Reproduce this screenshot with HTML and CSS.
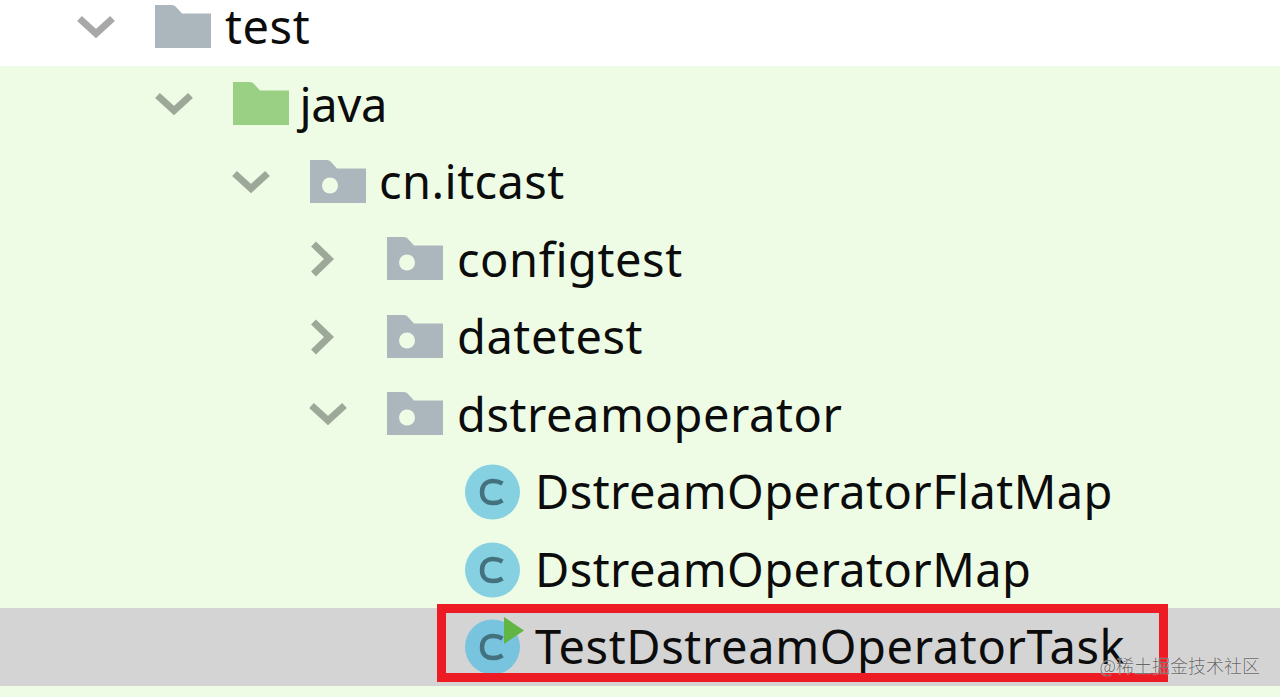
FILE: index.html
```
<!DOCTYPE html>
<html lang="en">
<head>
    <meta charset="UTF-8">
    <meta name="viewport" content="width=device-width, initial-scale=1.0">
    <title>Project tree</title>
    <link rel="stylesheet" href="styles.css">
</head>
<body>
    <svg width="0" height="0" class="defs">
        <symbol id="down" viewBox="0 0 38 38"><path d="M2.500 10.500L19 25.500L35.500 10.500"/></symbol>
        <symbol id="right" viewBox="0 0 38 38"><path d="M4.500 4L20 19L4.500 34"/></symbol>
        <symbol id="folder" viewBox="0 0 56 44"><path d="M0 0H17Q20 0 22 3L27 8.500H56V43H0Z"/></symbol>
        <symbol id="class" viewBox="0 0 56 56">
            <circle cx="27.500" cy="28" r="27.500"/>
            <path class="letter" d="M37.500 19.500C34 17.500 31 17 28 17C21 17 17 21.500 17 28.200C17 35 21 39 28 39C31.500 39 34.500 38.300 37.500 36.500"/>
        </symbol>
    </svg>

    <div class="tree">
        <div class="row root">
            <svg class="arrow"><use href="#down"/></svg>
            <svg class="folder"><use href="#folder"/></svg>
            <span class="label">test</span>
        </div>
        <div class="row level1">
            <svg class="arrow"><use href="#down"/></svg>
            <svg class="folder green"><use href="#folder"/></svg>
            <span class="label">java</span>
        </div>
        <div class="row level2">
            <svg class="arrow"><use href="#down"/></svg>
            <svg class="folder"><use href="#folder"/><circle class="dot" cx="20" cy="25.500" r="8"/></svg>
            <span class="label">cn.itcast</span>
        </div>
        <div class="row level3">
            <svg class="arrow"><use href="#right"/></svg>
            <svg class="folder"><use href="#folder"/><circle class="dot" cx="20" cy="25.500" r="8"/></svg>
            <span class="label">configtest</span>
        </div>
        <div class="row level3">
            <svg class="arrow"><use href="#right"/></svg>
            <svg class="folder"><use href="#folder"/><circle class="dot" cx="20" cy="25.500" r="8"/></svg>
            <span class="label">datetest</span>
        </div>
        <div class="row level3">
            <svg class="arrow"><use href="#down"/></svg>
            <svg class="folder"><use href="#folder"/><circle class="dot" cx="20" cy="25.500" r="8"/></svg>
            <span class="label">dstreamoperator</span>
        </div>
        <div class="row level4">
            <svg class="class"><use href="#class"/></svg>
            <span class="label">DstreamOperatorFlatMap</span>
        </div>
        <div class="row level4">
            <svg class="class"><use href="#class"/></svg>
            <span class="label">DstreamOperatorMap</span>
        </div>
        <div class="row level4 selected">
            <svg class="class"><use href="#class"/><path class="run" d="M39 -2L59 11.500L39 25Z"/></svg>
            <span class="label">TestDstreamOperatorTask</span>
            <div class="marker"></div>
        </div>
    </div>
    <div class="watermark">@稀土掘金技术社区</div>
</body>
</html>
```
FILE: styles.css
```
body {
    margin: 0;
    height: 697px;
    overflow: hidden;
    position: relative;
    background: #eefce6;
    font-family: "Noto Sans", sans-serif;
}
.defs {
    position: absolute;
}
.row {
    display: flex;
    align-items: center;
    position: relative;
    box-sizing: border-box;
    height: 77.5px;
    padding-left: 77px;
}
.level1 {
    padding-left: 154.5px;
}
.level2 {
    padding-left: 232px;
}
.level3 {
    padding-left: 309px;
}
.level4 {
    padding-left: 465px;
}
.selected {
    background: #d4d4d4;
}
.arrow {
    width: 38px;
    height: 38px;
    margin-right: 40px;
    fill: none;
    stroke: #9da899;
    stroke-width: 7;
}
.folder {
    width: 56px;
    height: 44px;
    fill: #abb7bd;
}
.green {
    fill: #9ad083;
}
.dot {
    fill: #eefce6;
}
.class {
    width: 56px;
    height: 56px;
    margin-top: 1px;
    fill: #85d1e2;
    overflow: visible;
}
.selected .class {
    fill: #78c4de;
}
.letter {
    fill: none;
    stroke: #43717e;
    stroke-width: 4.5;
}
.run {
    fill: #61b543;
}
.label {
    margin-left: 14px;
    font-size: 47px;
    line-height: 77px;
    letter-spacing: 0.55px;
    color: #0c0c0c;
    white-space: nowrap;
}
.root {
    height: 65.5px;
    padding-bottom: 12px;
    background: #fff;
}
.root .arrow {
    stroke: #a8a8a8;
}
.root .label {
    line-height: 53px;
}
.level1 .label {
    margin-left: 11px;
    letter-spacing: -0.3px;
}
.level2 .label {
    margin-left: 13px;
    letter-spacing: 0.45px;
}
.level4 .label {
    letter-spacing: 0.42px;
}
.selected .label {
    letter-spacing: 0.62px;
}
.marker {
    position: absolute;
    left: 437px;
    top: -4px;
    width: 731px;
    height: 78px;
    box-sizing: border-box;
    border: 9px solid #ed1c24;
}
.watermark {
    position: absolute;
    right: 20px;
    bottom: 19px;
    font-family: "Noto Sans CJK SC", sans-serif;
    font-size: 18px;
    line-height: 26px;
    color: #666;
    font-weight: 300;
    text-shadow: 0 0 1px #fff;
}
```
